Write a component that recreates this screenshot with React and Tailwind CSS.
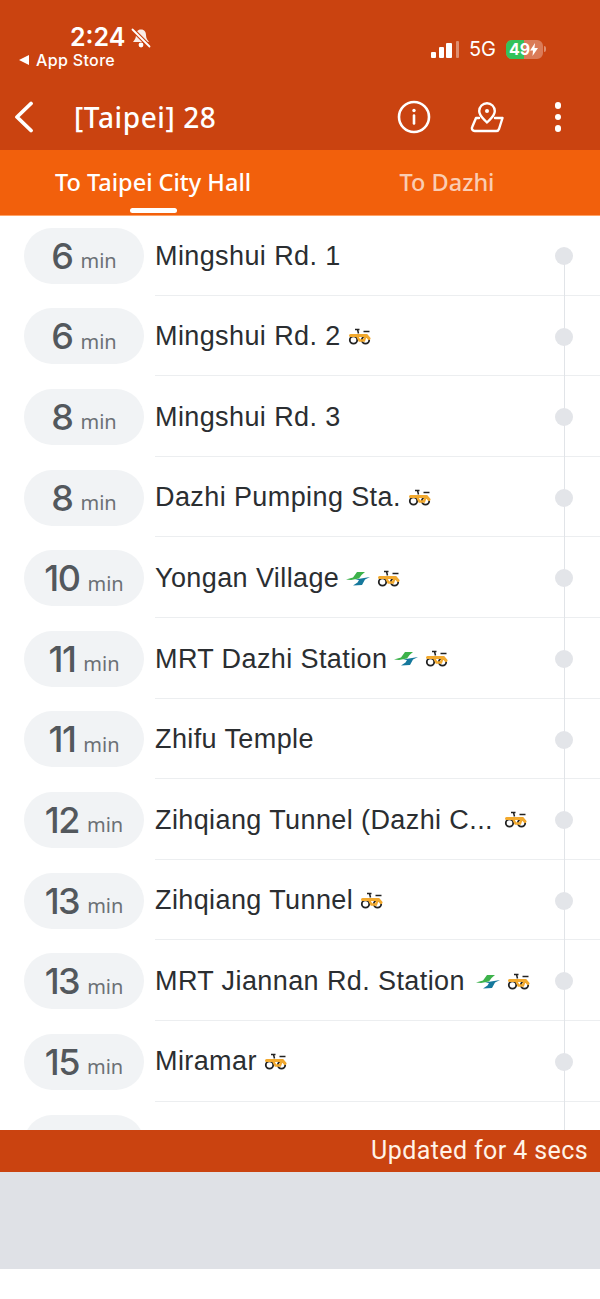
const stops = [
  { min: 6, name: 'Mingshui Rd. 1' },
  { min: 6, name: 'Mingshui Rd. 2', bike: true },
  { min: 8, name: 'Mingshui Rd. 3' },
  { min: 8, name: 'Dazhi Pumping Sta.', bike: true },
  { min: 10, name: 'Yongan Village', metro: true, bike: true },
  { min: 11, name: 'MRT Dazhi Station', metro: true, bike: true },
  { min: 11, name: 'Zhifu Temple' },
  { min: 12, name: 'Zihqiang Tunnel (Dazhi C...', bike: true, wide: true },
  { min: 13, name: 'Zihqiang Tunnel', bike: true },
  { min: 13, name: 'MRT Jiannan Rd. Station', metro: true, bike: true, wide: true },
  { min: 15, name: 'Miramar', bike: true },
];

function BikeIcon() {
  return (
    <svg width="23" height="17" viewBox="0 0 23 17" fill="none" className="shrink-0">
      <path d="M7 1.500h4.500M9.500 1.500l1 4" stroke="#222" strokeWidth="1.500" />
      <path d="M15.500 3.500h6" stroke="#222" strokeWidth="1.500" />
      <circle cx="5.500" cy="12" r="3.700" stroke="#222" strokeWidth="1.800" />
      <circle cx="17.500" cy="12" r="3.700" stroke="#222" strokeWidth="1.800" />
      <path d="M2.500 7.500h16l2.500 3" stroke="#f2a92e" strokeWidth="3" strokeLinecap="round" />
      <path d="M8.500 7l3 5.500h4.500l2-5.500" stroke="#f2a92e" strokeWidth="2.400" />
    </svg>
  );
}

function MetroIcon() {
  return (
    <svg width="24" height="15" viewBox="0 0 24 15" className="shrink-0">
      <path d="M0 8.500 L7 6.500 L11 1 L19 1 L15.500 4 L13 7.500 L5 9Z" fill="#3db24b" />
      <path d="M9 8.500 L24 6 L19 8.500 L16 14 L7 14.500 L11.500 11.500 L13 9Z" fill="#15789c" />
    </svg>
  );
}

function StopRow({ stop, first }) {
  return (
    <div className="relative flex h-[80.6px] shrink-0 items-center pl-6">
      <div className="mt-[1px] flex h-[56px] w-[120px] shrink-0 items-center justify-center gap-[8px] rounded-[28px] bg-[#f1f3f5] text-[#53585d]">
        <span className="font-['Inter',sans-serif] text-[36px] leading-none font-medium tracking-[-1.5px]">{stop.min}</span>
        <span className="mt-[11px] text-[20px] leading-none text-[#6b7075]">min</span>
      </div>
      <div className="ml-[11px] flex h-full min-w-0 flex-1 items-center gap-[7px] border-b border-[#eceef0] pt-[2px] font-['Liberation_Sans',sans-serif] text-[27px] tracking-[0.4px] text-[#2b2e31]">
        <span className={stop.wide ? 'mr-[4px] whitespace-nowrap' : 'whitespace-nowrap'}>{stop.name}</span>
        {stop.metro && <MetroIcon />}
        {stop.bike && <BikeIcon />}
      </div>
      {/* timeline line and stop dot */}
      <div className={`absolute right-[35px] bottom-0 w-[1.5px] bg-[#e1e4e8] ${first ? 'top-[40px]' : 'top-0'}`} />
      <div className="absolute top-[32px] right-[27px] size-[18px] rounded-full bg-[#e3e5e9]" />
    </div>
  );
}

export default function App() {
  return (
    <div className="flex h-[1299px] w-[600px] flex-col overflow-hidden bg-white font-['Noto_Sans',sans-serif]">
      <header className="h-[150px] shrink-0 bg-[#ca4310] text-white">
        <div className="flex h-[84px] items-start justify-between pt-[24px] pr-[54px] pl-[19px] font-['Inter',sans-serif]">
          <div>
            <div className="ml-[51px] flex h-[27px] items-center gap-[5px] text-[25px] leading-none font-semibold">
              2:24
              <svg width="22" height="22" viewBox="0 0 22 22" fill="none">
                <path d="M11 2.500c-3.500 0-5 2.500-5 5.500 0 3.500-1.500 5-3 7h16c-1.500-2-3-3.500-3-7 0-3-1.500-5.500-5-5.500z" fill="#fff" fillOpacity="0.9" />
                <circle cx="11" cy="18" r="2.400" fill="#fff" />
                <path d="M2.500 2.500l17 17" stroke="#ca4310" strokeWidth="4" />
                <path d="M2.500 2.500l17 17" stroke="#fff" strokeWidth="1.800" strokeLinecap="round" />
              </svg>
            </div>
            <div className="flex items-center gap-[7px] text-[16px] leading-[18px] font-medium tracking-[0.35px]">
              <span className="h-0 w-0 border-y-[5px] border-r-[10px] border-y-transparent border-r-white" />
              App Store
            </div>
          </div>
          <div className="mt-[15px] flex items-center">
            <div className="flex items-end gap-[2.500px]">
              <span className="h-[6px] w-[5px] rounded-[1px] bg-white" />
              <span className="h-[11px] w-[5px] rounded-[1px] bg-white" />
              <span className="h-[15px] w-[6px] rounded-[1px] bg-white" />
              <span className="ml-[1px] h-[17px] w-[3px] rounded-[1px] bg-white/40" />
            </div>
            <span className="ml-[10px] text-[20px] leading-none">5G</span>
            <div className="relative ml-[10px] flex h-[19px] w-[37px] items-center overflow-hidden rounded-[6px] bg-white/30 pl-[3px] text-[16px] font-bold leading-none">
              <div className="absolute inset-y-0 left-0 w-[18px] bg-[#34c25a]" />
              <span className="relative">49</span>
              <svg width="8" height="13" viewBox="0 0 8 13" className="relative">
                <path d="M5 0L0 7.500h3L2.500 13 8 5H4.500z" fill="#fff" />
              </svg>
            </div>
            <span className="ml-[1px] h-[6px] w-[2px] rounded-r bg-white/40" />
          </div>
        </div>
        <div className="flex h-[66px] items-center">
          <svg width="20" height="32" viewBox="0 0 20 32" fill="none" className="ml-[14px]">
            <path d="M17 2.500L3 16l14 13.500" stroke="#fff" strokeWidth="3.800" strokeLinecap="round" strokeLinejoin="round" />
          </svg>
          <h1 className="ml-[40px] text-[28px] leading-none font-medium tracking-[0.6px]">[Taipei] 28</h1>
          <div className="ml-auto flex items-center">
            <svg width="34" height="34" viewBox="0 0 34 34" fill="none">
              <circle cx="17" cy="17" r="15" stroke="#fff" strokeWidth="2.600" />
              <path d="M17 15.500v8" stroke="#fff" strokeWidth="2.600" strokeLinecap="round" />
              <circle cx="17" cy="10.500" r="1.700" fill="#fff" />
            </svg>
            {/* pin standing on a map tile */}
            <svg width="34" height="32" viewBox="0 0 34 32" fill="none" className="ml-[39px]">
              <path d="M17 21.500c-3.500-3.800-7.800-6.500-7.800-11.500a7.800 7.800 0 0 1 15.600 0c0 5-4.300 7.700-7.800 11.500z" stroke="#fff" strokeWidth="2.400" strokeLinejoin="round" />
              <circle cx="17" cy="10" r="2" fill="#fff" />
              <path d="M9 17H6L2.200 26a2.800 2.800 0 0 0 2.600 4h21.400a3 3 0 0 0 2.800-2L32.500 17H25" stroke="#fff" strokeWidth="2.400" strokeLinecap="round" strokeLinejoin="round" />
            </svg>
            <div className="mr-[39px] ml-[51px] flex flex-col gap-[5px]">
              <span className="size-[6.500px] rounded-full bg-white" />
              <span className="size-[6.500px] rounded-full bg-white" />
              <span className="size-[6.500px] rounded-full bg-white" />
            </div>
          </div>
        </div>
      </header>

      <nav className="relative flex h-[66px] shrink-0 border-b border-[#ffa366] bg-[#f2600c] text-[23.500px] font-medium">
        <div className="flex w-[306px] items-center justify-center text-white">To Taipei City Hall</div>
        <div className="flex w-[282px] items-center justify-center text-white/70">To Dazhi</div>
        <span className="absolute bottom-[2px] left-[130px] h-[5px] w-[47px] rounded-full bg-white" />
      </nav>

      <main className="-mt-px flex h-[915px] shrink-0 flex-col overflow-hidden">
        {stops.map((stop, i) => (
          <StopRow key={i} stop={stop} first={i === 0} />
        ))}
        <div className="relative flex h-[80.6px] shrink-0 pt-[13px] pl-6">
          <div className="h-[56px] w-[120px] rounded-[28px] bg-[#f1f3f5]" />
          <div className="absolute top-0 right-[35px] bottom-0 w-[1.5px] bg-[#e1e4e8]" />
        </div>
      </main>

      <div className="flex h-[42px] shrink-0 items-center justify-end bg-[#ca4310] pr-[12px] font-['Roboto',sans-serif] text-[25px] tracking-[0.4px] text-[#fff3e8]">
        Updated for 4 secs
      </div>
      <div className="h-[97px] shrink-0 bg-[#dfe1e6]" />
    </div>
  );
}
